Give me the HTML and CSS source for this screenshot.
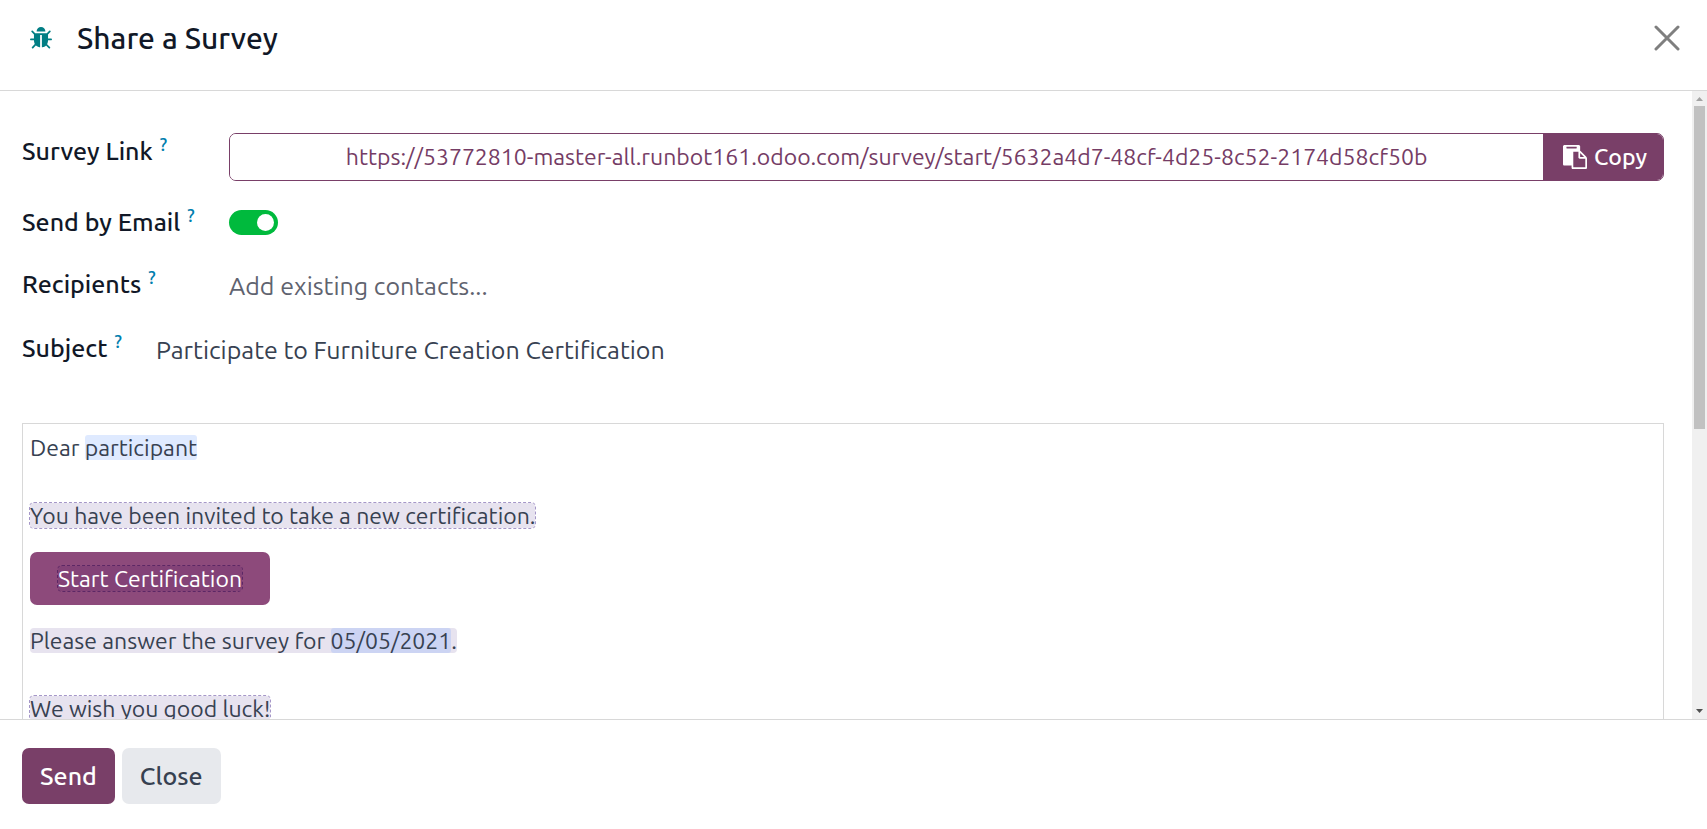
FILE: index.html
```html
<!DOCTYPE html>
<html lang="en">
<head>
    <meta charset="UTF-8">
    <meta name="viewport" content="width=device-width, initial-scale=1.0">
    <title>Share a Survey</title>
    <link rel="stylesheet" href="styles.css">
</head>
<body>
    <div class="modal">
        <header class="modal-header">
            <button type="button" class="debug-button" aria-label="Debug">
                <svg class="bug-icon" viewBox="32 64 1600 1600" aria-hidden="true">
                    <path fill="currentColor" d="M1632 960q0 26-19 45t-45 19h-224q0 171-67 290l208 209q19 19 19 45t-19 45q-18 19-45 19t-45-19l-198-197q-5 5-15 13t-42 28.5-65 36.5-82 29-97 13v-896h-128v896q-51 0-101.5-13.5t-87-33-66-39-43.5-32.5l-15-14-183 207q-20 21-48 21-24 0-43-16-19-18-20.5-44.5t15.5-46.5l202-227q-58-114-58-274h-224q-26 0-45-19t-19-45 19-45 45-19h224v-294l-173-173q-19-19-19-45t19-45 45-19 45 19l173 173h844l173-173q19-19 45-19t45 19 19 45-19 45l-173 173v294h224q26 0 45 19t19 45zm-480-576h-640q0-133 93.5-226.5t226.5-93.5 226.5 93.5 93.5 226.5z"/>
                </svg>
            </button>
            <h1 class="modal-title">Share a Survey</h1>
            <button type="button" class="close-button" aria-label="Dismiss">
                <svg class="close-icon" viewBox="0 0 26 26" aria-hidden="true">
                    <path fill="none" stroke="currentColor" stroke-width="3" stroke-linecap="round" d="M2 2l22 22M24 2L2 24"/>
                </svg>
            </button>
        </header>

        <div class="modal-content">
            <main class="modal-body">
                <form id="shareForm" class="share-form">
                    <div class="field link-field">
                        <label for="surveyLink">Survey Link<sup>?</sup></label>
                        <div class="link-group">
                            <input type="text" id="surveyLink" readonly value="https://53772810-master-all.runbot161.odoo.com/survey/start/5632a4d7-48cf-4d25-8c52-2174d58cf50b">
                            <button type="button" class="copy-button">
                                <svg class="paste-icon" viewBox="0 0 1792 1792" aria-hidden="true">
                                    <path fill="currentColor" d="M768 1664h896v-640h-416q-40 0-68-28t-28-68v-416h-384v1152zm256-1440v-64q0-13-9.5-22.5t-22.5-9.5h-704q-13 0-22.5 9.5t-9.5 22.5v64q0 13 9.5 22.5t22.5 9.5h704q13 0 22.5-9.5t9.5-22.5zm256 672h299l-299-299v299zm512 128v672q0 40-28 68t-68 28h-960q-40 0-68-28t-28-68v-160h-544q-40 0-68-28t-28-68v-1344q0-40 28-68t68-28h1088q40 0 68 28t28 68v328q21 13 36 28l408 408q28 28 48 76t20 88z"/>
                                </svg>
                                Copy
                            </button>
                        </div>
                    </div>
                    <div class="field">
                        <label for="sendEmail">Send by Email<sup>?</sup></label>
                        <input type="checkbox" id="sendEmail" class="switch" checked>
                    </div>
                    <div class="field">
                        <label for="recipients">Recipients<sup>?</sup></label>
                        <input type="text" id="recipients" class="text-input" placeholder="Add existing contacts...">
                    </div>
                    <div class="field subject-field">
                        <label for="subject">Subject<sup>?</sup></label>
                        <input type="text" id="subject" class="text-input" value="Participate to Furniture Creation Certification">
                    </div>
                </form>

                <div class="editor" contenteditable="true" spellcheck="false">
                    <p>Dear <span class="placeholder">participant</span></p>
                    <p class="spaced"><span class="branch">You have been invited to take a new certification.</span></p>
                    <p class="action"><a href="#" class="start-button"><span class="branch">Start Certification</span></a></p>
                    <p><span class="condition">Please answer the survey for <span class="placeholder date">05/05/2021</span>.</span></p>
                    <p class="spaced"><span class="branch">We wish you good luck!</span></p>
                </div>
            </main>
            <div class="scrollbar" aria-hidden="true">
                <svg class="arrow arrow-up" viewBox="0 0 15 15"><path fill="currentColor" d="M4 10h7L7.500 6z"/></svg>
                <div class="track"><div class="thumb"></div></div>
                <svg class="arrow" viewBox="0 0 15 15"><path fill="currentColor" d="M4 5h7L7.500 9z"/></svg>
            </div>
        </div>

        <footer class="modal-footer">
            <button type="submit" form="shareForm" class="btn btn-primary">Send</button>
            <button type="button" class="btn btn-secondary">Close</button>
        </footer>
    </div>
</body>
</html>
```

FILE: styles.css
```css
* {
    box-sizing: border-box;
}

body {
    font-family: Ubuntu, "Noto Sans", sans-serif;
    font-size: 25px;
    line-height: 34px;
    margin: 0;
    background-color: #fff;
    color: #374151;
}

button, input {
    font: inherit;
    margin: 0;
}

button {
    border: none;
    cursor: pointer;
}

.modal {
    display: flex;
    flex-direction: column;
    height: 100vh;
}

/* Header */
.modal-header {
    display: flex;
    align-items: center;
    padding: 20px 27px 34px 30px;
    border-bottom: 1px solid #d8d8d8;
}

.debug-button, .close-button {
    display: flex;
    padding: 0;
    background: none;
}

.debug-button {
    color: #017e84;
}

.bug-icon {
    width: 22px;
    height: 22px;
}

.modal-title {
    flex: 1;
    margin: 0 0 0 25px;
    font-size: 30px;
    font-weight: 500;
    line-height: 36px;
    color: #111827;
}

.close-button {
    color: #7f7f7f;
}

.close-icon {
    width: 26px;
    height: 26px;
}

/* Body */
.modal-content {
    display: flex;
    flex: 1;
    min-height: 0;
}

.modal-body {
    flex: 1;
    min-width: 0;
    overflow-y: auto;
    scrollbar-width: none;
    padding: 42px 28px 28px 22px;
}

.share-form {
    display: flex;
    flex-direction: column;
    gap: 26px;
}

.field {
    display: grid;
    grid-template-columns: 207px 1fr;
    align-items: center;
}

.link-field {
    margin-bottom: -2px;
}

.subject-field {
    grid-template-columns: 134px 1fr;
}

label {
    font-weight: 500;
    color: #111827;
}

.link-field label {
    align-self: start;
    padding-top: 1px;
}

sup {
    margin-left: 7px;
    font-size: 18px;
    line-height: 0;
    color: #017eae;
}

.link-group {
    display: flex;
    height: 48px;
    border: 1px solid #793f68;
    border-radius: 7px;
    overflow: hidden;
    font-size: 23px;
}

.link-group input {
    flex: 1;
    min-width: 0;
    padding: 0;
    border: none;
    outline: none;
    text-align: center;
    color: #753c65;
}

.copy-button {
    display: flex;
    align-items: center;
    gap: 7px;
    padding: 0 16px 0 20px;
    background-color: #793f68;
    color: #fff;
    font-weight: 500;
}

.paste-icon {
    width: 24px;
    height: 24px;
}

.switch {
    appearance: none;
    display: flex;
    justify-content: flex-end;
    width: 49px;
    height: 25px;
    padding: 4px;
    border-radius: 13px;
    background-color: #00ba3d;
}

.switch::before {
    content: '';
    width: 17px;
    height: 17px;
    border-radius: 50%;
    background-color: #fff;
}

.text-input {
    height: 38px;
    padding: 4px 0 0;
    border: none;
    outline: none;
    background: none;
    color: #374151;
}

.text-input::placeholder {
    color: #5f636f;
}

/* Mail content */
.editor {
    min-height: 792px;
    margin-top: 56px;
    padding: 7px;
    border: 1px solid #d8d8d8;
    outline: none;
    font-size: 23px;
}

.editor p {
    margin: 0;
}

.editor .spaced {
    margin-top: 34px;
}

.editor .action {
    margin: 19px 0;
}

.placeholder {
    border-radius: 3px;
    background-color: #dfeaff;
}

.branch, .condition {
    border-radius: 4px;
    background-color: #e7e3ef;
}

.branch {
    outline: 1px dashed #a597c8;
}

.date {
    background-color: #ccd4f3;
}

.start-button {
    display: inline-block;
    padding: 10px 28px 9px;
    border-radius: 7px;
    background-color: #8d4a7b;
    color: #fff;
    text-decoration: none;
}

.start-button .branch {
    background-color: #834277;
    outline-color: #5c2765;
}

/* Scrollbar */
.scrollbar {
    display: flex;
    flex-direction: column;
    width: 15px;
    background-color: #f0f0f0;
}

.arrow {
    width: 15px;
    height: 15px;
    color: #505050;
}

.arrow-up {
    color: #a3a3a3;
}

.track {
    flex: 1;
    padding: 0 2px;
}

.thumb {
    height: 54%;
    background-color: #c1c1c1;
}

/* Footer */
.modal-footer {
    display: flex;
    gap: 7px;
    padding: 28px 22px 25px;
    border-top: 1px solid #d8d8d8;
}

.btn {
    height: 56px;
    padding: 0 18px;
    border-radius: 7px;
    font-weight: 500;
}

.btn-primary {
    background-color: #793f68;
    color: #fff;
}

.btn-secondary {
    background-color: #e7e9ed;
    color: #374151;
}
```
